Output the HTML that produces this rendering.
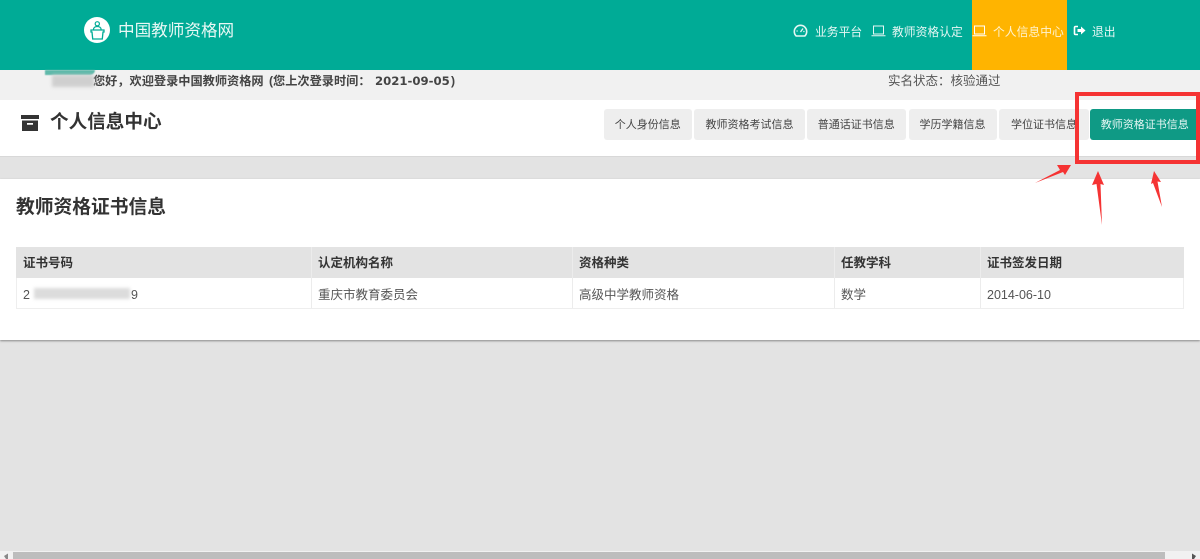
<!DOCTYPE html>
<html lang="zh-CN">
<head>
<meta charset="utf-8">
<title>中国教师资格网</title>
<style>
html,body{margin:0;padding:0;width:1200px;height:559px;overflow:hidden;background:#e3e3e3;font-family:"Liberation Sans","Noto Sans CJK SC",sans-serif;color:#333}
.a{position:absolute;white-space:nowrap}
.t{position:absolute;white-space:nowrap;line-height:20px;height:20px}
.tab{position:absolute;top:109px;height:31px;line-height:32px;background:#eee;border-radius:3px;font-size:11px;color:#444;text-align:center;white-space:nowrap}
.cell{position:absolute;font-size:12.5px;line-height:20px;white-space:nowrap}
.nav{color:#e6f7f4;font-size:11.800px;top:22px}
.w{font-size:12.200px;font-weight:700;color:#444;top:71px}
</style>
</head>
<body>
<div class="a" style="left:0;top:0;width:1200px;height:70px;background:#00ab96"></div>
<svg class="a" style="left:84px;top:17px" width="26" height="26" viewBox="0 0 26 26">
<circle cx="13" cy="13" r="13" fill="#fff"/>
<circle cx="13.300" cy="6.800" r="2.100" fill="none" stroke="#00ab96" stroke-width="1.200"/>
<path d="M9.500 12.500c0-2 1.700-3 3.800-3s3.800 1 3.800 3" fill="none" stroke="#00ab96" stroke-width="1.200"/>
<path d="M7 13h13v2h-1l-.7 7H8.700L8 15H7z" fill="none" stroke="#00ab96" stroke-width="1.300"/>
</svg>
<div class="t" style="left:118px;top:21px;font-size:16.600px;color:#e8f8f5">中国教师资格网</div>

<div class="a" style="left:972px;top:0;width:95px;height:70px;background:#ffb400"></div>
<svg class="a" style="left:793px;top:24px" width="15" height="14" viewBox="0 0 15 14"><path d="M3.200 12a6.200 6.200 0 1 1 8.600 0z" fill="none" stroke="#e6f7f4" stroke-width="1.600"/><path d="M7.500 8L10 4.500M3.500 7h1.200M10.300 7.500h1.200" stroke="#e6f7f4" stroke-width="1.300" fill="none"/></svg>
<div class="t nav" style="left:815px">业务平台</div>
<svg class="a" style="left:871px;top:25px" width="15" height="12" viewBox="0 0 15 12"><path d="M2.500 1h10v8h-10zM.5 10.800h14" fill="none" stroke="#e6f7f4" stroke-width="1"/></svg>
<div class="t nav" style="left:892px">教师资格认定</div>
<svg class="a" style="left:972px;top:25px" width="15" height="12" viewBox="0 0 15 12"><path d="M2.500 1h10v8h-10zM.5 10.800h14" fill="none" stroke="#fff" stroke-width="1"/></svg>
<div class="t nav" style="left:993px;color:#fff3d0">个人信息中心</div>
<svg class="a" style="left:1073px;top:25px" width="13" height="12" viewBox="0 0 13 12"><path d="M5 1.500H2.500a1 1 0 0 0-1 1v6a1 1 0 0 0 1 1H5" fill="none" stroke="#fff" stroke-width="1.600"/><path d="M4.500 4h3.500V1.500L12.500 5.500 8 9.500V7H4.500z" fill="#fff"/></svg>
<div class="t nav" style="left:1092px">退出</div>

<div class="a" style="left:0;top:70px;width:1200px;height:30px;background:#f1f1f1"></div>
<div class="t w" style="left:93px">您好，欢迎登录中国教师资格网</div>
<div class="t w" style="left:269px">(您上次登录时间：</div>
<div class="t" style="left:375px;top:71px;font-family:'DejaVu Sans',sans-serif;font-size:11.700px;font-weight:700;color:#444">2021-09-05</div>
<div class="t w" style="left:451px">)</div>
<div class="a" style="left:45px;top:70px;width:50px;height:5px;background:#5fb9aa;border-radius:0 0 12px 0;filter:blur(.6px)"></div>
<div class="a" style="left:52px;top:75px;width:42px;height:12px;background:#cfcfcf;filter:blur(1.500px)"></div>
<div class="t" style="left:888px;top:71px;font-size:12.500px;color:#555">实名状态：核验通过</div>

<div class="a" style="left:0;top:100px;width:1200px;height:56px;background:#fff;border-bottom:1px solid #d8d8d8"></div>
<svg class="a" style="left:21px;top:114px" width="18" height="18" viewBox="0 0 18 18"><path d="M0 1h18v4H0z" fill="#333"/><path d="M1 6.500h16V17H1zM6 9v1.800h6V9z" fill="#333" fill-rule="evenodd"/></svg>
<div class="t" style="left:50px;top:112px;font-size:18.600px;font-weight:700;color:#333">个人信息中心</div>

<div class="tab" style="left:603.500px;width:88.500px">个人身份信息</div>
<div class="tab" style="left:694px;width:111px">教师资格考试信息</div>
<div class="tab" style="left:806.500px;width:99.500px">普通话证书信息</div>
<div class="tab" style="left:908.500px;width:88px">学历学籍信息</div>
<div class="tab" style="left:999px;width:90px">学位证书信息</div>
<div class="tab" style="left:1089.500px;width:110.500px;background:#0f9a85;color:#e6f7f4">教师资格证书信息</div>

<div class="a" style="left:0;top:157px;width:1200px;height:22px;background:#e3e3e3"></div>
<div class="a" style="left:0;top:179px;width:1200px;height:161px;background:#fff;box-shadow:0 1px 2px #888"></div>
<div class="t" style="left:16px;top:197px;font-size:18.750px;font-weight:700;color:#333">教师资格证书信息</div>

<div class="a" style="left:16px;top:247px;width:1168px;height:31px;background:#e3e3e3"></div>
<div class="a" style="left:16px;top:278px;width:1166px;height:30px;background:#fff;border:1px solid #eee;border-top:0"></div>
<div class="a" style="left:311px;top:247px;width:1px;height:61px;background:#ececec"></div>
<div class="a" style="left:572px;top:247px;width:1px;height:61px;background:#ececec"></div>
<div class="a" style="left:834px;top:247px;width:1px;height:61px;background:#ececec"></div>
<div class="a" style="left:980px;top:247px;width:1px;height:61px;background:#ececec"></div>

<div class="cell" style="left:23px;top:253px;font-weight:700">证书号码</div>
<div class="cell" style="left:318px;top:253px;font-weight:700">认定机构名称</div>
<div class="cell" style="left:579px;top:253px;font-weight:700">资格种类</div>
<div class="cell" style="left:841px;top:253px;font-weight:700">任教学科</div>
<div class="cell" style="left:987px;top:253px;font-weight:700">证书签发日期</div>

<div class="cell" style="left:23px;top:285px;color:#555">2</div>
<div class="a" style="left:34px;top:288px;width:96px;height:11px;background:#dcdcdc;filter:blur(1.500px)"></div>
<div class="cell" style="left:131px;top:285px;color:#555">9</div>
<div class="cell" style="left:318px;top:285px;color:#555">重庆市教育委员会</div>
<div class="cell" style="left:579px;top:285px;color:#555">高级中学教师资格</div>
<div class="cell" style="left:841px;top:285px;color:#555">数学</div>
<div class="cell" style="left:987px;top:285px;color:#555">2014-06-10</div>

<div class="a" style="left:0;top:551px;width:1200px;height:8px;background:#f1f1f1"></div>
<div class="a" style="left:13px;top:552px;width:1152px;height:7px;background:#bdbdbd"></div>
<svg class="a" style="left:0;top:551px" width="1200" height="8" viewBox="0 0 1200 8"><path d="M4 5L8 2.500V8H6z" fill="#888"/><path d="M1196 5L1192 2.500V8h2z" fill="#555"/></svg>

<svg class="a" style="left:0;top:0;pointer-events:none" width="1200" height="559" viewBox="0 0 1200 559">
<path d="M1077 94h121v68h-121z" fill="none" stroke="#f53333" stroke-width="4"/>
<path d="M1035 183L1060 170 1057 165 1071 165 1065 175 1063 172z" fill="#f53333"/>
<path d="M1098 171L1104 185 1100.500 184 1102 225 1096.500 184 1092 185z" fill="#f53333"/>
<path d="M1154 171L1161 182 1157.500 181.500 1162 207 1153 183 1151 184z" fill="#f53333"/>
</svg>
</body>
</html>
